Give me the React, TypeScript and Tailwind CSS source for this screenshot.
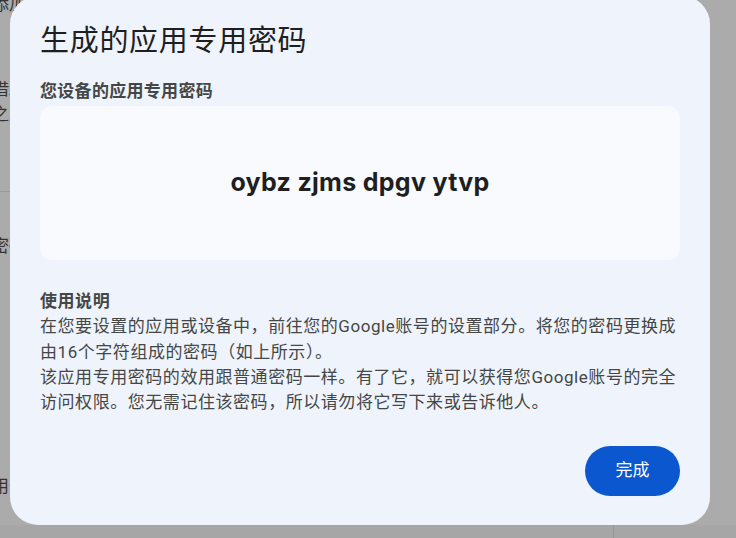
import React from "react";

const cjk = { fontFamily: '"Roboto", "Noto Sans CJK SC", sans-serif' };

export default function App() {
  return (
    <div className="relative w-[736px] h-[538px] overflow-hidden bg-[#ababab]" style={cjk}>
      {/* underlying page, dimmed */}
      <div className="flex flex-col w-[600px] h-full text-[#333] text-[17px] leading-[20px] -ml-[8px]">
        <div className="h-[85px] pt-0 -mt-[6px]">添加</div>
        <div className="h-[25px]">借助</div>
        <div className="h-[87px]">之后</div>
        <div className="border-t border-[#9a9a9a] h-[48px]"></div>
        <div className="h-[240px] -mt-[3px]">密码</div>
        <div className="">用于</div>
      </div>
      <div className="absolute left-0 right-0 bottom-0 h-[13px] bg-[#a6a6a6] flex">
        <div className="w-[614px] border-r border-[#999]"></div>
      </div>

      {/* dialog */}
      <div className="absolute left-[10px] top-[-4px] w-[700px] h-[529px] rounded-[28px] bg-[#eff3fb] flex flex-col px-[30px] pt-[27px]">
        <h1 className="text-[29px] leading-[36px] text-[#1f1f1f] tracking-[0.7px]">生成的应用专用密码</h1>
        <div className="mt-[21px] text-[17px] leading-[22px] font-bold text-[#444746] tracking-[0.3px]">您设备的应用专用密码</div>
        <div className="mt-[4px] h-[154px] rounded-[12px] bg-[#f8fafe] flex items-center justify-center">
          <span
            className="text-[25px] font-bold text-[#1f1f1f] tracking-[0.3px]"
            style={{ fontFamily: '"Inter", "Roboto", sans-serif' }}
          >
            oybz zjms dpgv ytvp
          </span>
        </div>
        <div className="mt-[29px] text-[17px] leading-[25.3px] text-[#444746] tracking-[0.55px]">
          <div className="font-bold">使用说明</div>
          <div>在您要设置的应用或设备中，前往您的Google账号的设置部分。将您的密码更换成</div>
          <div>由16个字符组成的密码（如上所示）。</div>
          <div>该应用专用密码的效用跟普通密码一样。有了它，就可以获得您Google账号的完全</div>
          <div>访问权限。您无需记住该密码，所以请勿将它写下来或告诉他人。</div>
        </div>
        <div className="mt-auto mb-[29px] flex justify-end">
          <button className="w-[95px] h-[50px] rounded-full bg-[#0b57d0] text-white text-[17px]">完成</button>
        </div>
      </div>
    </div>
  );
}
